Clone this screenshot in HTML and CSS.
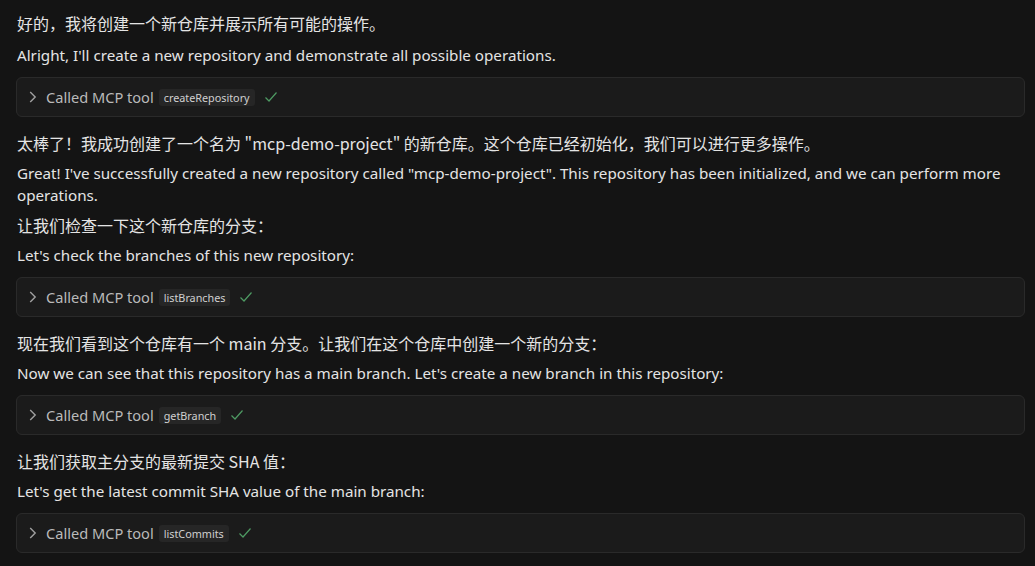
FILE: index.html
```html
<!DOCTYPE html>
<html lang="zh">
<head>
<meta charset="utf-8">
<title>MCP demo</title>
<link rel="stylesheet" href="styles.css">
</head>
<body>
<div class="chat">
  <p class="zh">好的，我将创建一个新仓库并展示所有可能的操作。</p>
  <p class="en">Alright, I'll create a new repository and demonstrate all possible operations.</p>
  <div class="tool">
    <svg class="chev" viewBox="0 0 8 12" width="8" height="12"><path d="M1.2 1 L6.2 6 L1.2 11" fill="none" stroke="currentColor" stroke-width="1.4"/></svg>
    <span class="label">Called MCP tool</span>
    <span class="badge">createRepository</span>
    <svg class="check" viewBox="0 0 14 12" width="14" height="12"><path d="M1.5 6.5 L5 10 L12.5 1.5" fill="none" stroke="currentColor" stroke-width="1.2"/></svg>
  </div>
  <p class="zh">太棒了！我成功创建了一个名为 "mcp-demo-project" 的新仓库。这个仓库已经初始化，我们可以进行更多操作。</p>
  <p class="en">Great! I've successfully created a new repository called "mcp-demo-project". This repository has been initialized, and we can perform more operations.</p>
  <p class="zh">让我们检查一下这个新仓库的分支：</p>
  <p class="en">Let's check the branches of this new repository:</p>
  <div class="tool">
    <svg class="chev" viewBox="0 0 8 12" width="8" height="12"><path d="M1.2 1 L6.2 6 L1.2 11" fill="none" stroke="currentColor" stroke-width="1.4"/></svg>
    <span class="label">Called MCP tool</span>
    <span class="badge">listBranches</span>
    <svg class="check" viewBox="0 0 14 12" width="14" height="12"><path d="M1.5 6.5 L5 10 L12.5 1.5" fill="none" stroke="currentColor" stroke-width="1.2"/></svg>
  </div>
  <p class="zh">现在我们看到这个仓库有一个 main 分支。让我们在这个仓库中创建一个新的分支：</p>
  <p class="en">Now we can see that this repository has a main branch. Let's create a new branch in this repository:</p>
  <div class="tool">
    <svg class="chev" viewBox="0 0 8 12" width="8" height="12"><path d="M1.2 1 L6.2 6 L1.2 11" fill="none" stroke="currentColor" stroke-width="1.4"/></svg>
    <span class="label">Called MCP tool</span>
    <span class="badge">getBranch</span>
    <svg class="check" viewBox="0 0 14 12" width="14" height="12"><path d="M1.5 6.5 L5 10 L12.5 1.5" fill="none" stroke="currentColor" stroke-width="1.2"/></svg>
  </div>
  <p class="zh">让我们获取主分支的最新提交 SHA 值：</p>
  <p class="en">Let's get the latest commit SHA value of the main branch:</p>
  <div class="tool">
    <svg class="chev" viewBox="0 0 8 12" width="8" height="12"><path d="M1.2 1 L6.2 6 L1.2 11" fill="none" stroke="currentColor" stroke-width="1.4"/></svg>
    <span class="label">Called MCP tool</span>
    <span class="badge">listCommits</span>
    <svg class="check" viewBox="0 0 14 12" width="14" height="12"><path d="M1.5 6.5 L5 10 L12.5 1.5" fill="none" stroke="currentColor" stroke-width="1.2"/></svg>
  </div>
</div>
</body>
</html>
```
FILE: styles.css
```css
html, body {
  margin: 0;
  padding: 0;
  background: #141414;
  height: 100%;
  overflow: hidden;
}
.chat {
  padding: 12px 10px 0 17px;
  font-family: "Noto Sans", "Noto Sans CJK SC", sans-serif;
  font-size: 15.2px;
  color: #e4e4e4;
}
.chat p {
  margin: 0 0 8px;
  line-height: 22px;
}
.chat p.zh {
  font-family: "Noto Sans CJK SC", "Noto Sans", sans-serif;
  font-size: 16px;
}
.chat p.zh:first-child {
  margin-bottom: 10px;
}
.tool {
  display: flex;
  align-items: center;
  height: 38px;
  margin: 11px 0 15px -1px;
  padding: 0 12px 0 12px;
  background: #1b1b1b;
  border: 1px solid #2a2a2a;
  border-radius: 6px;
}
.chev {
  color: #a0a0a0;
  margin-right: 9px;
}
.label {
  color: #bababa;
  font-size: 14.6px;
  margin-right: 5px;
}
.badge {
  background: #262626;
  color: #d0d0d0;
  font-size: 10.8px;
  line-height: 17px;
  padding: 0 5px;
  border-radius: 3px;
  margin-right: 9px;
}
.check {
  color: #4e9a63;
}
```
